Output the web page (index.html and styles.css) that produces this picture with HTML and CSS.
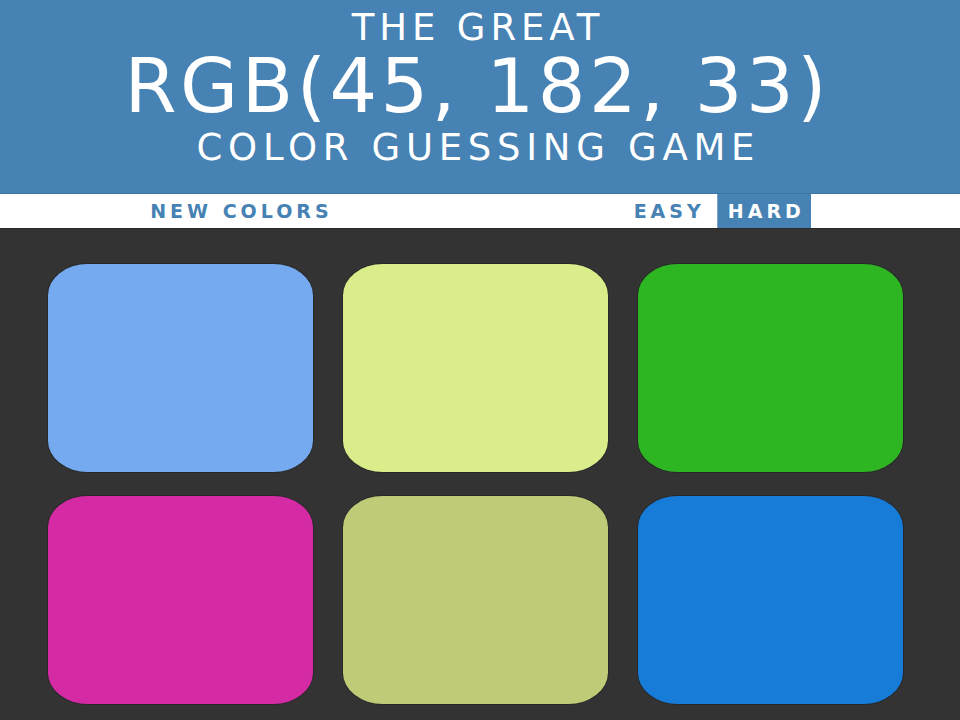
FILE: index.html
```html
<!DOCTYPE html>
<html lang="en">
<head>
<meta charset="utf-8">
<title>Color Game</title>
<link rel="stylesheet" href="styles.css">
</head>
<body>
<header class="banner">
  <div class="line line-top">The Great</div>
  <div class="line line-rgb">RGB(45, 182, 33)</div>
  <div class="line line-bottom">Color Guessing Game</div>
</header>
<nav class="stripe">
  <button class="btn btn-new">New Colors</button>
  <span class="message"></span>
  <button class="btn btn-easy">Easy</button>
  <button class="btn btn-hard selected">Hard</button>
</nav>
<main class="board">
  <div class="square sq1"></div>
  <div class="square sq2"></div>
  <div class="square sq3"></div>
  <div class="square sq4"></div>
  <div class="square sq5"></div>
  <div class="square sq6"></div>
</main>
</body>
</html>
```
FILE: styles.css
```css
html, body {
  margin: 0;
  padding: 0;
  height: 100%;
}
body {
  background: #333333;
  font-family: "DejaVu Sans", sans-serif;
  overflow: hidden;
}
.banner {
  background: #4682b4;
  color: #ffffff;
  text-align: center;
  text-transform: uppercase;
  padding: 6px 9px 0 0;
  height: 194px;
  box-sizing: border-box;
  border-bottom: 1px solid #3c74a4;
}
.line {
  white-space: nowrap;
}
.line-top {
  font-size: 37px;
  line-height: 44px;
  letter-spacing: 4.9px;
  padding-left: 4.9px;
}
.line-rgb {
  font-size: 75px;
  line-height: 72px;
  letter-spacing: 3.5px;
  padding-left: 3.5px;
}
.line-bottom {
  font-size: 37px;
  line-height: 44px;
  margin-top: 4px;
  letter-spacing: 5.7px;
  padding-left: 5.7px;
}
.stripe {
  background: #ffffff;
  height: 35px;
  display: flex;
  justify-content: center;
  align-items: stretch;
  padding-right: 9px;
  border-bottom: 1px solid #2a2a2a;
  box-sizing: border-box;
}
.btn {
  border: none;
  background: none;
  margin: 0;
  padding: 0 6px 0 10px;
  font-family: "DejaVu Sans", sans-serif;
  font-weight: 700;
  font-size: 19px;
  letter-spacing: 4px;
  text-transform: uppercase;
  color: #4682b4;
  height: 34px;
  line-height: 34px;
}
.message {
  width: 285px;
}
.btn-hard {
  margin-left: 6px;
}
.selected {
  background: #4682b4;
  color: #ffffff;
  border-left: 1px solid #7aa6cc;
}
.board {
  display: grid;
  grid-template-columns: repeat(3, 265px);
  grid-auto-rows: 208px;
  column-gap: 30px;
  row-gap: 24px;
  justify-content: center;
  padding: 35px 9px 0 0;
}
.square {
  border-radius: 15%;
  box-shadow: 0 0 0 1px rgba(0, 0, 0, 0.22);
}
.sq1 { background: #75aaf0; }
.sq2 { background: #d9ed8a; }
.sq3 { background: #2db621; }
.sq4 { background: #d42aa4; }
.sq5 { background: #c0cb78; }
.sq6 { background: #177bd8; }
```
